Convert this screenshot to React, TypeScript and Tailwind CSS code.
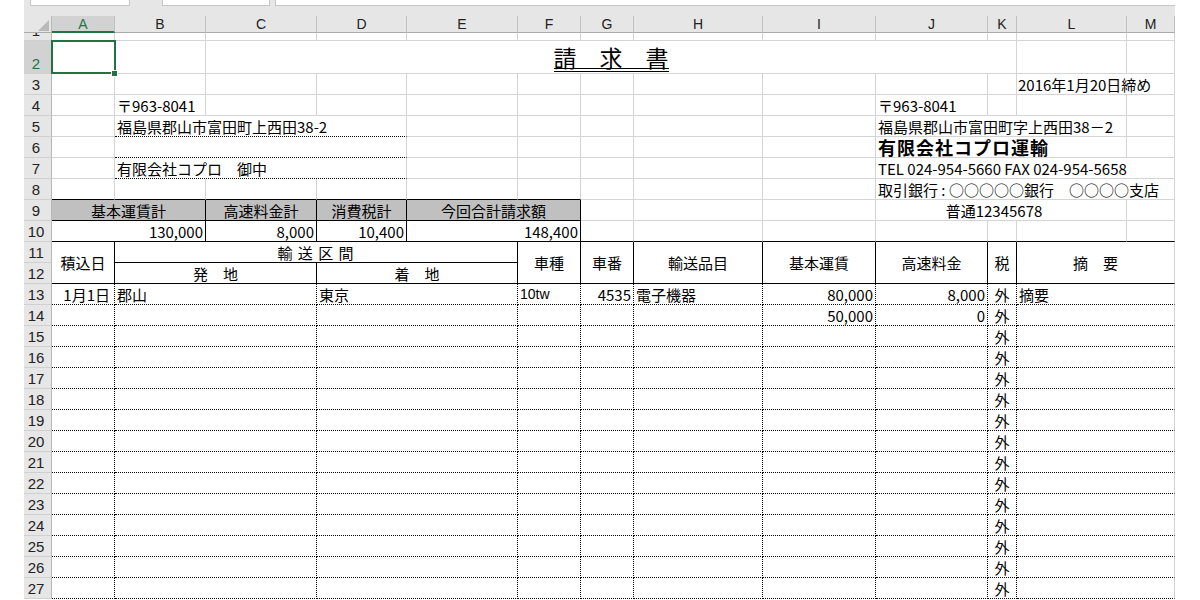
import React from 'react';

type Bd = 'g' | 'k' | 'd' | 'n';

const R: Record<Bd, string> = {
  g: 'border-r border-r-[#d4d4d4]',
  k: 'border-r border-r-black',
  d: 'border-r border-r-black [border-right-style:dotted]!',
  n: '',
};

const B: Record<Bd, string> = {
  g: 'border-b border-b-[#d4d4d4]',
  k: 'border-b border-b-black',
  d: 'border-b border-b-black [border-bottom-style:dotted]!',
  n: '',
};

const SPAN: Record<number, string> = {
  1: '',
  2: 'col-span-2',
  3: 'col-span-3',
  4: 'col-span-4',
  9: 'col-span-9',
};

const RSPAN: Record<number, string> = { 1: '', 2: 'row-span-2' };

interface CellProps {
  s?: number;
  rs?: number;
  r?: Bd;
  b?: Bd;
  cls?: string;
  children?: React.ReactNode;
}

const C = ({ s = 1, rs = 1, r = 'g', b = 'g', cls = '', children }: CellProps) => (
  <div className={`${SPAN[s]} ${RSPAN[rs]} ${R[r]} ${B[b]} flex items-center overflow-hidden whitespace-nowrap ${cls}`}>
    {children}
  </div>
);

const RH = ({ n, sel }: { n: number; sel?: boolean }) => (
  <div
    className={`flex items-end justify-center overflow-hidden pr-[3px] border-r border-r-[#b8b8b8] border-b border-b-[#d0d0d0] font-['Liberation_Sans',sans-serif] text-[15px] leading-[18px] ${
      sel ? 'bg-[#d2d2d2] text-[#217346]' : 'bg-[#e6e6e6] text-[#222]'
    }`}
  >
    <span className={n === 1 ? 'block leading-[21px] mb-[-1px]' : 'block'}>{n}</span>
  </div>
);

const COLS = ['A', 'B', 'C', 'D', 'E', 'F', 'G', 'H', 'I', 'J', 'K', 'L', 'M'];

const Blanks = ({ n, b = 'g' }: { n: number; b?: Bd }) => (
  <>
    {Array.from({ length: n }, (_, i) => (
      <C key={i} b={b} />
    ))}
  </>
);

interface DataRow {
  a?: string;
  from?: string;
  to?: string;
  car?: string;
  no?: string;
  item?: string;
  base?: string;
  hw?: string;
  memo?: string;
}

const data: Record<number, DataRow> = {
  13: { a: '1月1日', from: '郡山', to: '東京', car: '10tw', no: '4535', item: '電子機器', base: '80,000', hw: '8,000', memo: '摘要' },
  14: { base: '50,000', hw: '0' },
};

const hd = 'bg-[#c0c0c0] justify-center';

export default function App() {
  const rows = Array.from({ length: 15 }, (_, i) => 13 + i);

  return (
    <div className="w-[1200px] h-[600px] bg-white overflow-hidden">
      <div className="ml-[24px] w-[1151px]">
        {/* formula bar remnants */}
        <div className="flex h-[16px] bg-[#e6e6e6]">
          <div className="ml-[6px] w-[100px] h-[6px] bg-white border border-t-0 border-[#c6c6c6]" />
          <div className="ml-[32px] w-[108px] h-[6px] bg-white border border-t-0 border-[#c6c6c6]" />
          <div className="ml-[5px] flex-1 h-[6px] bg-white border border-t-0 border-r-0 border-[#c6c6c6]" />
        </div>

        <div className="grid grid-cols-[28px_63px_91px_111px_90px_111px_63px_53px_129px_113px_112px_29px_110px_48px] grid-rows-[17px_8px_33px_repeat(25,21px)] font-['Noto_Sans_CJK_JP',sans-serif] text-[15px] leading-[21px] text-black">
          {/* column headers */}
          <div className="bg-[#e6e6e6] border-r border-r-[#b8b8b8] border-b border-b-[#ababab]">
            <svg width="28" height="16" viewBox="0 0 28 16">
              <polygon points="25,4 25,15 14,15" fill="#b9b9b9" />
            </svg>
          </div>
          {COLS.map((c) => (
            <div
              key={c}
              className={`flex items-center justify-center font-['Liberation_Sans',sans-serif] text-[14px] leading-[16px] border-r border-r-[#c0c0c0] ${
                c === 'A'
                  ? 'bg-[#d2d2d2] text-[#217346] border-b-2 border-b-[#217346]'
                  : 'bg-[#e6e6e6] text-[#222] border-b border-b-[#ababab]'
              }`}
            >
              {c}
            </div>
          ))}

          {/* row 1 */}
          <RH n={1} />
          <Blanks n={13} />

          {/* row 2 */}
          <RH n={2} sel />
          <div className="relative border-r border-r-[#d4d4d4] border-b border-b-[#d4d4d4]">
            <div className="absolute left-[-1px] top-[-1px] w-[65px] h-[34px] border-2 border-[#217346] z-10" />
            <div className="absolute left-[59px] top-[29px] w-[7px] h-[7px] bg-[#217346] border border-white z-20" />
          </div>
          <C />
          <C s={9} cls="justify-center items-end pb-[1px]">
            <span className="inline-block text-[23px] leading-[22px] border-b-[4px] border-double border-b-black">請　求　書</span>
          </C>
          <C />
          <C />

          {/* row 3 */}
          <RH n={3} />
          <Blanks n={11} />
          <C s={2} cls="pl-[1px]">2016年1月20日締め</C>

          {/* row 4 */}
          <RH n={4} />
          <C />
          <C cls="pl-[2px]">〒963-8041</C>
          <Blanks n={7} />
          <C cls="pl-[2px]">〒963-8041</C>
          <Blanks n={3} />

          {/* row 5 */}
          <RH n={5} />
          <C />
          <C s={3} b="d" cls="pl-[2px]">福島県郡山市富田町上西田38-2</C>
          <Blanks n={5} />
          <C s={3} cls="pl-[2px]">福島県郡山市富田町字上西田38－2</C>
          <C />

          {/* row 6 */}
          <RH n={6} />
          <C />
          <C s={3} b="d" />
          <Blanks n={5} />
          <C s={3} cls="pl-[2px]">
            <span className="text-[18px] font-bold leading-[18px] tracking-[1px]">有限会社コプロ運輸</span>
          </C>
          <C />

          {/* row 7 */}
          <RH n={7} />
          <C />
          <C s={3} b="d" cls="pl-[2px]">有限会社コプロ　御中</C>
          <Blanks n={5} />
          <C s={4} cls="pl-[2px]">TEL 024-954-5660 FAX 024-954-5658</C>

          {/* row 8 */}
          <RH n={8} />
          <Blanks n={6} b="k" />
          <Blanks n={3} />
          <C s={4} cls="pl-[2px]">取引銀行 : ○○○○○銀行　○○○○支店</C>

          {/* row 9 */}
          <RH n={9} />
          <C s={2} r="k" b="k" cls={hd}>基本運賃計</C>
          <C r="k" b="k" cls={hd}>高速料金計</C>
          <C r="k" b="k" cls={hd}>消費税計</C>
          <C s={2} r="k" b="k" cls={hd}>今回合計請求額</C>
          <Blanks n={3} />
          <C s={3} cls="justify-center pr-[14px]">普通12345678</C>
          <C />

          {/* row 10 */}
          <RH n={10} />
          <C s={2} r="k" b="k" cls="justify-end pr-[2px]">130,000</C>
          <C r="k" b="k" cls="justify-end pr-[2px]">8,000</C>
          <C r="k" b="k" cls="justify-end pr-[2px]">10,400</C>
          <C s={2} r="k" b="k" cls="justify-end pr-[2px]">148,400</C>
          <Blanks n={7} b="k" />

          {/* rows 11-12 */}
          <RH n={11} />
          <C rs={2} r="k" b="k" cls="justify-center">積込日</C>
          <C s={4} r="k" b="k" cls="justify-center tracking-[1px]">輸 送 区 間</C>
          <C rs={2} r="k" b="k" cls="justify-center">車種</C>
          <C rs={2} r="k" b="k" cls="justify-center">車番</C>
          <C rs={2} r="k" b="k" cls="justify-center">輸送品目</C>
          <C rs={2} r="k" b="k" cls="justify-center">基本運賃</C>
          <C rs={2} r="k" b="k" cls="justify-center">高速料金</C>
          <C rs={2} r="k" b="k" cls="justify-center">税</C>
          <C s={2} rs={2} r="g" b="k" cls="justify-center">摘　要</C>
          <RH n={12} />
          <C s={2} r="k" b="k" cls="justify-center">発　地</C>
          <C s={2} r="k" b="k" cls="justify-center">着　地</C>

          {/* data rows */}
          {rows.map((n) => {
            const d = data[n] || {};
            return (
              <React.Fragment key={n}>
                <RH n={n} />
                <C r="d" b="d" cls="justify-end pr-[4px]">{d.a}</C>
                <C s={2} r="d" b="d" cls="pl-[2px]">{d.from}</C>
                <C s={2} r="d" b="d" cls="pl-[2px]">{d.to}</C>
                <C r="d" b="d" cls="pl-[2px]">
                  <span className="font-['Liberation_Sans_Narrow','Liberation_Sans',sans-serif] text-[14px] leading-[20px]">{d.car}</span>
                </C>
                <C r="d" b="d" cls="justify-end pr-[2px]">{d.no}</C>
                <C r="d" b="d" cls="pl-[2px]">{d.item}</C>
                <C r="d" b="d" cls="justify-end pr-[2px]">{d.base}</C>
                <C r="d" b="d" cls="justify-end pr-[2px]">{d.hw}</C>
                <C r="d" b="d" cls="justify-center">外</C>
                <C s={2} r="g" b="d" cls="pl-[2px]">{d.memo}</C>
              </React.Fragment>
            );
          })}
        </div>
      </div>
    </div>
  );
}
